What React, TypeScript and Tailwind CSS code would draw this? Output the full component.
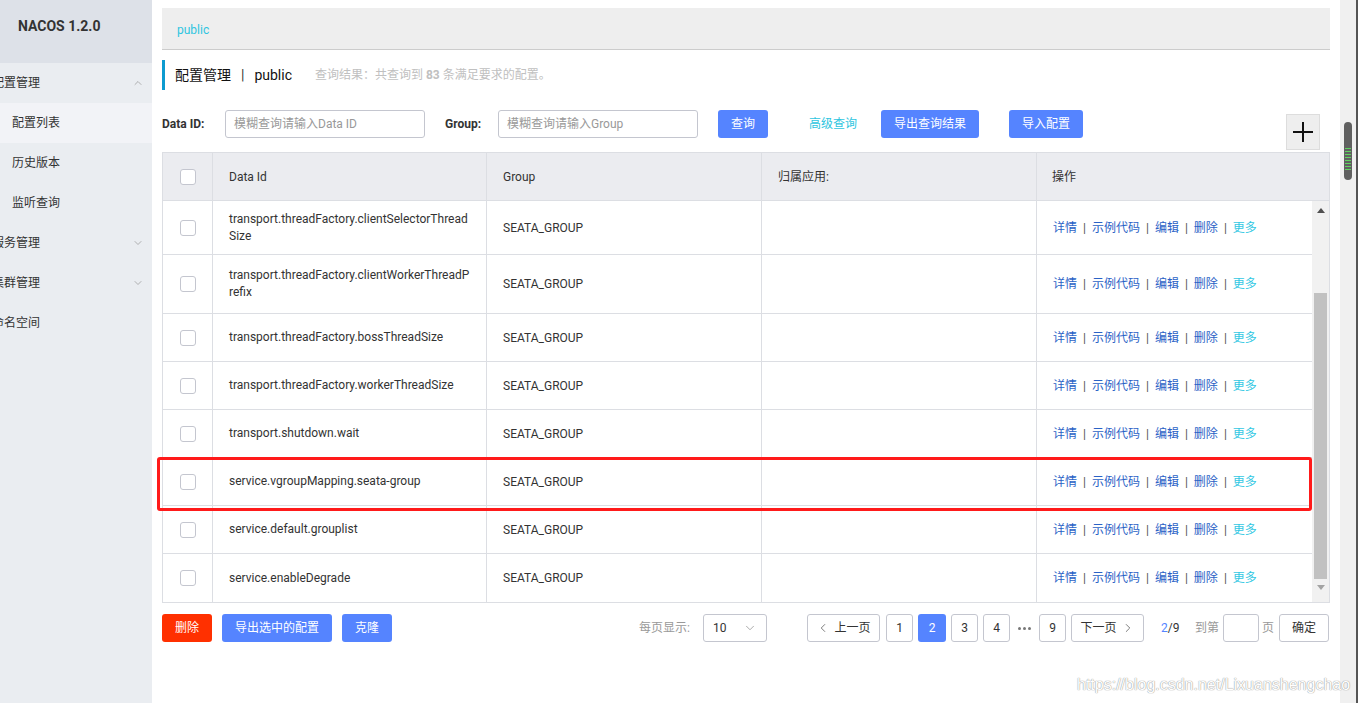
import { ChevronDown, ChevronUp, ChevronLeft, ChevronRight } from "lucide-react"

const rows = [
    { id: ["transport.threadFactory.clientSelectorThread", "Size"], h: "h-[54px]" },
    { id: ["transport.threadFactory.clientWorkerThreadP", "refix"], h: "h-[59px]" },
    { id: ["transport.threadFactory.bossThreadSize"], h: "h-[48px]" },
    { id: ["transport.threadFactory.workerThreadSize"], h: "h-[48px]" },
    { id: ["transport.shutdown.wait"], h: "h-[48px]" },
    { id: ["service.vgroupMapping.seata-group"], h: "h-[48px]" },
    { id: ["service.default.grouplist"], h: "h-[48px]" },
    { id: ["service.enableDegrade"], h: "h-[48px]" },
]

const Checkbox = () => (
    <span className="block w-[16px] h-[16px] rounded-[3px] border border-[#c4c6cf] bg-white" />
)

const Actions = () => (
    <div className="flex items-center text-[12px] text-[#2a62c6] whitespace-nowrap">
        <span>详情</span>
        <span className="mx-[6px] text-[#555]">|</span>
        <span>示例代码</span>
        <span className="mx-[6px] text-[#555]">|</span>
        <span>编辑</span>
        <span className="mx-[6px] text-[#555]">|</span>
        <span>删除</span>
        <span className="mx-[6px] text-[#555]">|</span>
        <span className="text-[#33c8e3]">更多</span>
    </div>
)

const menu = [
    { label: "配置管理", top: true, icon: "up" },
    { label: "配置列表", active: true },
    { label: "历史版本" },
    { label: "监听查询" },
    { label: "服务管理", top: true, icon: "down" },
    { label: "集群管理", top: true, icon: "down" },
    { label: "命名空间", top: true },
]

const PageBtn = ({ children, active }: { children: React.ReactNode, active?: boolean }) => (
    <span className={active
        ? "shrink-0 flex items-center justify-center h-[28px] w-[28px] rounded-[3px] bg-[#5584ff] text-white text-[12px]"
        : "shrink-0 flex items-center justify-center h-[28px] w-[27px] rounded-[3px] border border-[#c4c6cf] bg-white text-[#333] text-[12px]"}>
        {children}
    </span>
)

const App = () => {
    return (
        <div className="relative flex w-[1358px] h-[703px] overflow-hidden bg-white text-[#333]" style={{ fontFamily: 'Roboto, "Noto Sans CJK SC", sans-serif' }}>
            {/* sidebar */}
            <aside className="w-[152px] shrink-0 bg-[#eaedf1] overflow-hidden">
                <div className="h-[63px] bg-[#dde1e8] flex items-center pl-[18px] pb-[11px] text-[14px] font-bold text-[#333]">NACOS 1.2.0</div>
                {menu.map((m) => (
                    <div key={m.label} className={`h-[40px] flex items-center text-[12px] text-[#333] whitespace-nowrap ${m.active ? "bg-[#f2f3f7]" : ""}`}>
                        <span className={m.top ? "ml-[-8px]" : "ml-[12px]"}>{m.label}</span>
                        {m.icon === "up" && <ChevronUp className="ml-auto mr-[8px] w-[12px] h-[12px] text-[#999]" strokeWidth={1.5} />}
                        {m.icon === "down" && <ChevronDown className="ml-auto mr-[8px] w-[12px] h-[12px] text-[#999]" strokeWidth={1.5} />}
                    </div>
                ))}
            </aside>

            {/* main */}
            <main className="w-[1188px] shrink-0 px-[10px]">
                <div className="mt-[8px] h-[42px] bg-[#eeeeee] border-b border-[#cccccc] flex items-center pt-[3px] px-[15px] text-[12px] text-[#2ec5e0]">public</div>

                <div className="mt-[10px] h-[30px] border-l-[3px] border-[#0d9bd0] pl-[10px] flex items-center whitespace-nowrap">
                    <span className="text-[14px] text-[#111]">配置管理</span>
                    <span className="text-[14px] text-[#333] mx-[10px]">|</span>
                    <span className="text-[14px] text-[#111]">public</span>
                    <span className="ml-[23px] text-[12px] text-[#c0c0c0]">查询结果：共查询到 <span className="font-bold">83</span> 条满足要求的配置。</span>
                </div>

                <div className="mt-[20px] h-[42px] flex items-start whitespace-nowrap">
                    <div className="h-[28px] flex items-center">
                        <span className="text-[12px] font-bold text-[#333] w-[63px]">Data ID:</span>
                        <div className="w-[200px] h-[28px] border border-[#c4c6cf] rounded-[3px] flex items-center px-[8px] text-[12px] text-[#999]">模糊查询请输入Data ID</div>
                        <span className="ml-[20px] text-[12px] font-bold text-[#333] w-[53px]">Group:</span>
                        <div className="w-[200px] h-[28px] border border-[#c4c6cf] rounded-[3px] flex items-center px-[8px] text-[12px] text-[#999]">模糊查询请输入Group</div>
                        <span className="ml-[20px] w-[50px] h-[28px] rounded-[3px] bg-[#5584ff] text-white text-[12px] flex items-center justify-center">查询</span>
                        <span className="ml-[41px] text-[12px] text-[#2ec5e0]">高级查询</span>
                        <span className="ml-[24px] w-[98px] h-[28px] rounded-[3px] bg-[#5584ff] text-white text-[12px] flex items-center justify-center">导出查询结果</span>
                        <span className="ml-[30px] w-[74px] h-[28px] rounded-[3px] bg-[#5584ff] text-white text-[12px] flex items-center justify-center">导入配置</span>
                    </div>
                    <div className="ml-auto mr-[10px] mt-[4px] w-[34px] h-[36px] bg-[#eeeeee] border border-[#dddddd] flex items-center justify-center">
                        <svg width="22" height="22" viewBox="0 0 22 22"><path d="M11 1v20M1 11h20" stroke="#111" strokeWidth="2" /></svg>
                    </div>
                </div>

                {/* table */}
                <div className="border border-[#dcdee3]">
                    <div className="grid grid-cols-[50px_274px_275px_275px_1fr] h-[48px] bg-[#ebecf0] border-b border-[#dcdee3] text-[12px] text-[#333]">
                        <div className="flex items-center justify-center border-r border-[#dcdee3]"><Checkbox /></div>
                        <div className="flex items-center px-[16px] border-r border-[#dcdee3]">Data Id</div>
                        <div className="flex items-center px-[16px] border-r border-[#dcdee3]">Group</div>
                        <div className="flex items-center px-[16px] border-r border-[#dcdee3]">归属应用:</div>
                        <div className="flex items-center px-[15px]">操作</div>
                    </div>
                    <div className="relative flex">
                        <div className="w-[1149px]">
                            {rows.map((r, i) => (
                                <div key={i} className={`grid grid-cols-[50px_274px_275px_275px_1fr] ${r.h} ${i < rows.length - 1 ? "border-b" : ""} border-[#dcdee3] text-[12px] text-[#333]`}>
                                    <div className="flex items-center justify-center border-r border-[#dcdee3]"><Checkbox /></div>
                                    <div className="flex flex-col justify-center px-[16px] border-r border-[#dcdee3] leading-[17px]">
                                        {r.id.map((l) => <span key={l}>{l}</span>)}
                                    </div>
                                    <div className="flex items-center px-[16px] border-r border-[#dcdee3]">SEATA_GROUP</div>
                                    <div className="border-r border-[#dcdee3]" />
                                    <div className="flex items-center px-[16px]"><Actions /></div>
                                </div>
                            ))}
                        </div>
                        {/* inner scrollbar */}
                        <div className="w-[17px] bg-[#f1f1f1] flex flex-col items-center">
                            <svg width="8" height="5" viewBox="0 0 8 5" className="mt-[7px]"><path d="M0 5L4 0L8 5Z" fill="#505050" /></svg>
                            <div className="mt-[80px] w-[13px] h-[286px] bg-[#c1c1c1]" />
                            <svg width="8" height="5" viewBox="0 0 8 5" className="mt-[6px]"><path d="M0 0L4 5L8 0Z" fill="#a3a3a3" /></svg>
                        </div>
                        <div className="absolute left-[-6px] top-[256px] w-[1155px] h-[54px] border-[3px] border-[#ff1a1a] rounded-[3px] pointer-events-none" />
                    </div>
                </div>

                {/* footer */}
                <div className="mt-[11px] h-[28px] flex items-center text-[12px] whitespace-nowrap">
                    <span className="shrink-0 w-[50px] h-[28px] rounded-[3px] bg-[#ff3000] text-white flex items-center justify-center">删除</span>
                    <span className="shrink-0 ml-[10px] w-[110px] h-[28px] rounded-[3px] bg-[#5584ff] text-white flex items-center justify-center">导出选中的配置</span>
                    <span className="shrink-0 ml-[10px] w-[50px] h-[28px] rounded-[3px] bg-[#5584ff] text-white flex items-center justify-center">克隆</span>

                    <span className="shrink-0 ml-[247px] w-[53px] text-[#999]">每页显示:</span>
                    <div className="shrink-0 ml-[11px] w-[64px] h-[28px] border border-[#c4c6cf] rounded-[3px] flex items-center px-[9px] text-[#333]">
                        <span>10</span>
                        <ChevronDown className="ml-auto w-[14px] h-[14px] text-[#888]" strokeWidth={1.2} />
                    </div>
                    <span className="shrink-0 ml-[40px] w-[73px] h-[28px] border border-[#c4c6cf] rounded-[3px] flex items-center justify-center text-[#333]">
                        <ChevronLeft className="w-[14px] h-[14px] text-[#555] mr-[4px]" strokeWidth={1.3} />上一页
                    </span>
                    <div className="shrink-0 ml-[6px] flex items-center gap-[5px]">
                        <PageBtn>1</PageBtn>
                        <PageBtn active>2</PageBtn>
                        <PageBtn>3</PageBtn>
                        <PageBtn>4</PageBtn>
                        <span className="w-[19px] flex items-center justify-center gap-[2px]">
                            <span className="block w-[3px] h-[3px] rounded-full bg-[#777]" />
                            <span className="block w-[3px] h-[3px] rounded-full bg-[#777]" />
                            <span className="block w-[3px] h-[3px] rounded-full bg-[#777]" />
                        </span>
                        <PageBtn>9</PageBtn>
                    </div>
                    <span className="shrink-0 ml-[5px] w-[73px] h-[28px] border border-[#c4c6cf] rounded-[3px] flex items-center justify-center text-[#333]">
                        下一页<ChevronRight className="w-[14px] h-[14px] text-[#555] ml-[4px]" strokeWidth={1.3} />
                    </span>
                    <span className="shrink-0 ml-[17px] w-[18px] text-[#333]"><span className="text-[#5584ff]">2</span>/9</span>
                    <span className="shrink-0 ml-[16px] w-[24px] text-[#999]">到第</span>
                    <div className="shrink-0 ml-[4px] w-[36px] h-[28px] border border-[#c4c6cf] rounded-[3px]" />
                    <span className="shrink-0 ml-[3px] w-[12px] text-[#999]">页</span>
                    <span className="shrink-0 ml-[5px] w-[50px] h-[28px] border border-[#c4c6cf] rounded-[3px] flex items-center justify-center text-[#333]">确定</span>
                </div>
            </main>

            {/* page scrollbar */}
            <div className="w-[18px] shrink-0 bg-[#f0f0f0] border-r-2 border-[#555] flex justify-center">
                <div className="mt-[122px] w-[8px] h-[58px] rounded-full bg-[#606060] flex flex-col items-center pt-[26px] gap-[2px]">
                    {[0, 1, 2, 3, 4, 5, 6, 7].map((k) => <span key={k} className="block w-[6px] h-[1px] bg-[#5fd35f]" />)}
                </div>
            </div>

            <span className="absolute left-[1077px] top-[673px] text-[16px] text-white whitespace-nowrap" style={{ fontFamily: '"Liberation Sans", Arial, sans-serif', textShadow: "0 0 1px #999, 0 0 1px #999" }}>https://blog.csdn.net/Lixuanshengchao</span>
        </div>
    )
}

export default App
